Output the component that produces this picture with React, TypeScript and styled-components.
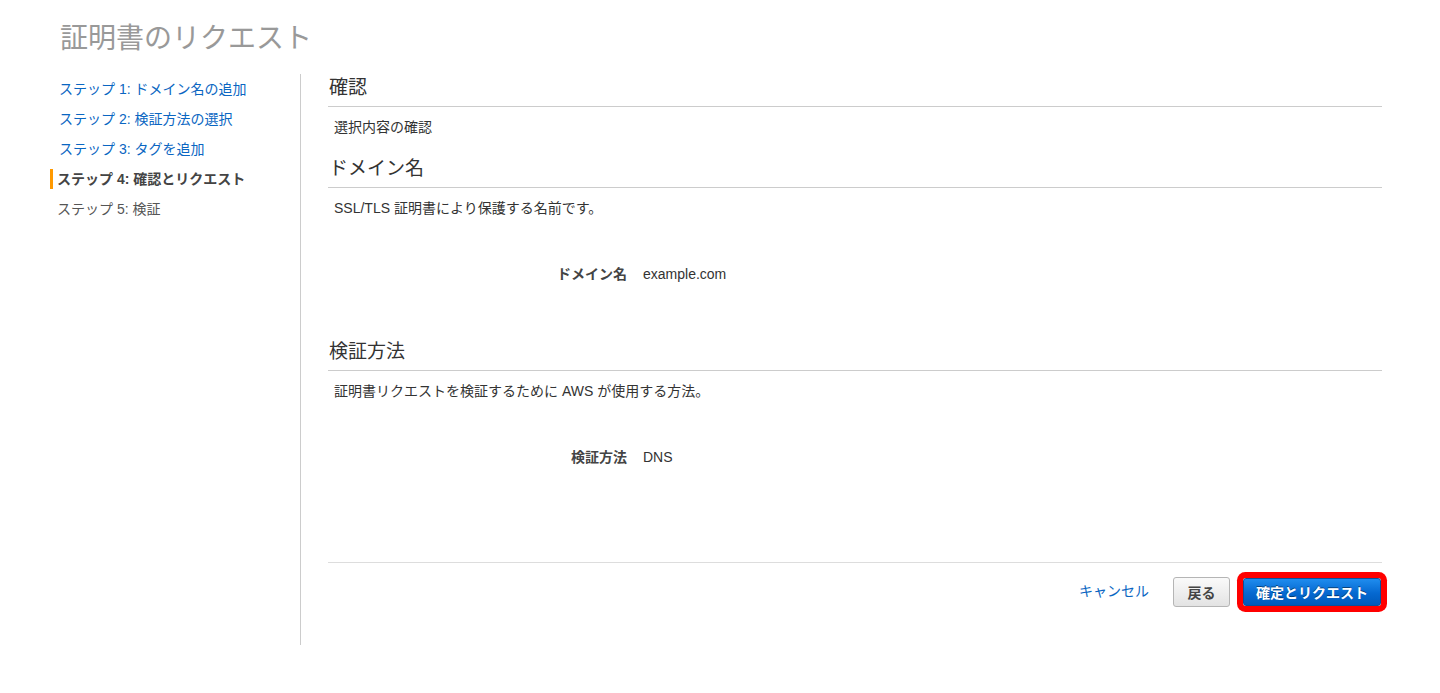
import React from "react";
import styled, { createGlobalStyle } from "styled-components";

const GlobalStyle = createGlobalStyle`
  html, body { margin: 0; padding: 0; background: #fff; }
  body {
    font-family: "Liberation Sans", "Noto Sans CJK JP", Arial, sans-serif;
    color: #444;
    -webkit-font-smoothing: antialiased;
  }
`;

const Page = styled.div`
  width: 1440px;
  height: 693px;
  box-sizing: border-box;
  padding: 20px 58px 0 49px;
`;

const Title = styled.h1`
  margin: 0 0 0 11px;
  height: 54px;
  line-height: 38px;
  font-size: 28px;
  font-weight: 400;
  color: #999;
`;

const Body = styled.div`
  display: flex;
`;

const Sidebar = styled.nav`
  width: 252px;
  height: 571px;
  box-sizing: border-box;
  border-right: 1px solid #ccc;
  display: flex;
  flex-direction: column;
`;

const StepItem = styled.div<{ $state: "link" | "active" | "pending" }>`
  height: 30px;
  line-height: 30px;
  font-size: 14px;
  display: flex;
  align-items: center;
  padding-left: ${(p) => (p.$state === "link" ? "10px" : "8px")};
  color: ${(p) => (p.$state === "link" ? "#0a66c2" : p.$state === "active" ? "#444" : "#555")};
  font-weight: ${(p) => (p.$state === "active" ? 700 : 400)};
  position: relative;
  &::before {
    content: "";
    display: ${(p) => (p.$state === "active" ? "block" : "none")};
    position: absolute;
    left: 1px;
    top: 5px;
    width: 3px;
    height: 20px;
    background: #f90;
  }
`;

const Main = styled.main`
  flex: 1;
  margin-left: 27px;
  display: flex;
  flex-direction: column;
`;

const SectionHeading = styled.h2<{ $mt: number }>`
  margin: ${(p) => p.$mt}px 0 0 0;
  padding: 0 0 6px 1px;
  font-size: 19px;
  line-height: 24px;
  font-weight: 400;
  color: #333;
  border-bottom: 1px solid #ccc;
`;

const Description = styled.p`
  margin: 10px 0 0 0;
  padding-left: 6px;
  font-size: 14px;
  line-height: 20px;
  color: #333;
`;

const Row = styled.div<{ $mt: number }>`
  margin-top: ${(p) => p.$mt}px;
  display: grid;
  grid-template-columns: 299px 1fr;
  column-gap: 16px;
  font-size: 14px;
  line-height: 20px;
`;

const RowLabel = styled.div`
  text-align: right;
  font-weight: 700;
  color: #444;
`;

const RowValue = styled.div`
  color: #333;
`;

const Footer = styled.div`
  margin-top: 95px;
  border-top: 1px solid #ddd;
  padding-top: 14px;
  display: flex;
  justify-content: flex-end;
  align-items: center;
`;

const CancelLink = styled.a`
  font-size: 14px;
  color: #0a66c2;
  text-decoration: none;
  margin-right: 24px;
  margin-top: -4px;
  cursor: pointer;
`;

const BackButton = styled.button`
  height: 30px;
  width: 57px;
  box-sizing: border-box;
  border: 1px solid #b5b5b5;
  border-radius: 3px;
  background: linear-gradient(#fafafa, #e3e3e3);
  font-family: inherit;
  font-size: 14px;
  font-weight: 700;
  color: #444;
  margin-right: 13px;
  padding: 0;
`;

const PrimaryButton = styled.button`
  height: 28px;
  width: 138px;
  box-sizing: border-box;
  border: 1px solid #0b4f9a;
  border-radius: 3px;
  background: linear-gradient(#1f8cee, #0568d0 55%, #0059ba);
  font-family: inherit;
  font-size: 14px;
  font-weight: 700;
  color: #fff;
  text-shadow: 0 -1px 0 rgba(0, 0, 0, 0.45);
  padding: 0;
  margin-right: 1px;
  box-shadow: 0 0 0 6px #f00;
`;

const steps: { label: string; state: "link" | "active" | "pending" }[] = [
  { label: "ステップ 1: ドメイン名の追加", state: "link" },
  { label: "ステップ 2: 検証方法の選択", state: "link" },
  { label: "ステップ 3: タグを追加", state: "link" },
  { label: "ステップ 4: 確認とリクエスト", state: "active" },
  { label: "ステップ 5: 検証", state: "pending" },
];

export default function App() {
  return (
    <>
      <GlobalStyle />
      <Page>
        <Title>証明書のリクエスト</Title>
        <Body>
          <Sidebar>
            {steps.map((s) => (
              <StepItem key={s.label} $state={s.state}>
                {s.label}
              </StepItem>
            ))}
          </Sidebar>
          <Main>
            <SectionHeading $mt={2}>確認</SectionHeading>
            <Description>選択内容の確認</Description>
            <SectionHeading $mt={20}>ドメイン名</SectionHeading>
            <Description>SSL/TLS 証明書により保護する名前です。</Description>
            <Row $mt={46}>
              <RowLabel>ドメイン名</RowLabel>
              <RowValue>example.com</RowValue>
            </Row>
            <SectionHeading $mt={56}>検証方法</SectionHeading>
            <Description>証明書リクエストを検証するために AWS が使用する方法。</Description>
            <Row $mt={46}>
              <RowLabel>検証方法</RowLabel>
              <RowValue>DNS</RowValue>
            </Row>
            <Footer>
              <CancelLink>キャンセル</CancelLink>
              <BackButton>戻る</BackButton>
              <PrimaryButton>確定とリクエスト</PrimaryButton>
            </Footer>
          </Main>
        </Body>
      </Page>
    </>
  );
}
